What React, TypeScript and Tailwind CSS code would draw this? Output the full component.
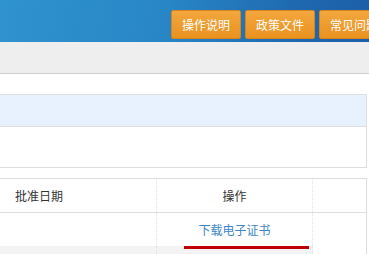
import React from 'react';

const font = { fontFamily: '"Noto Sans CJK SC", "Liberation Sans", sans-serif' };

const navButtons = ['操作说明', '政策文件', '常见问题'];

const App = () => {
  return (
    <div className="w-[369px] h-[254px] overflow-hidden bg-white text-[12px] text-[#333]" style={font}>
      {/* header */}
      <div className="h-[42px] flex items-start pt-[10px] pl-[171px] gap-[4px] bg-[linear-gradient(100deg,#2f93cf_0%,#2886c6_45%,#1e68b0_80%,#1c5fa8_100%)]">
        {navButtons.map(label => (
          <button
            key={label}
            className="shrink-0 w-[70px] h-[29px] rounded-[2px] border border-[#d9831a] bg-[linear-gradient(#f3a73d,#ea921f)] text-white text-[12px] leading-none"
          >
            {label}
          </button>
        ))}
      </div>

      {/* gray sub bar */}
      <div className="h-[32px] bg-[#eeeeee] border-b border-[#cfcfcf]" />

      {/* info panel */}
      <div className="mt-[20px] w-[367px] border border-l-0 border-[#dddddd]">
        <div className="h-[32px] bg-[#e8f2fe] border-b border-[#dddddd]" />
        <div className="h-[40px] bg-white" />
      </div>

      {/* table */}
      <div className="mt-[10px] w-[367px] border-t border-r border-[#dddddd]">
        <div className="flex h-[34px] border-b border-[#dddddd]">
          <div className="w-[157px] flex items-center pl-[15px] border-r border-dotted border-[#e3e3e3]">批准日期</div>
          <div className="w-[156px] flex items-center justify-center border-r border-dotted border-[#e3e3e3]">操作</div>
          <div className="flex-1" />
        </div>
        <div className="flex h-[33px]">
          <div className="w-[157px] border-r border-dotted border-[#e3e3e3]" />
          <div className="w-[156px] flex items-center justify-center border-r border-dotted border-[#e3e3e3]">
            <a className="text-[#3d86c6] pt-[1px]">下载电子证书</a>
          </div>
          <div className="flex-1" />
        </div>
        <div className="flex h-[10px]">
          <div className="w-[157px] bg-[#f3f3f3] border-r border-dotted border-[#e3e3e3]" />
          <div className="w-[156px] bg-[#f3f3f3] border-r border-dotted border-[#e3e3e3] pl-[27px] pr-[3px]">
            <div className="h-[3px] bg-[#c00000]" />
          </div>
          <div className="flex-1" />
        </div>
      </div>
    </div>
  );
};

export default App;
